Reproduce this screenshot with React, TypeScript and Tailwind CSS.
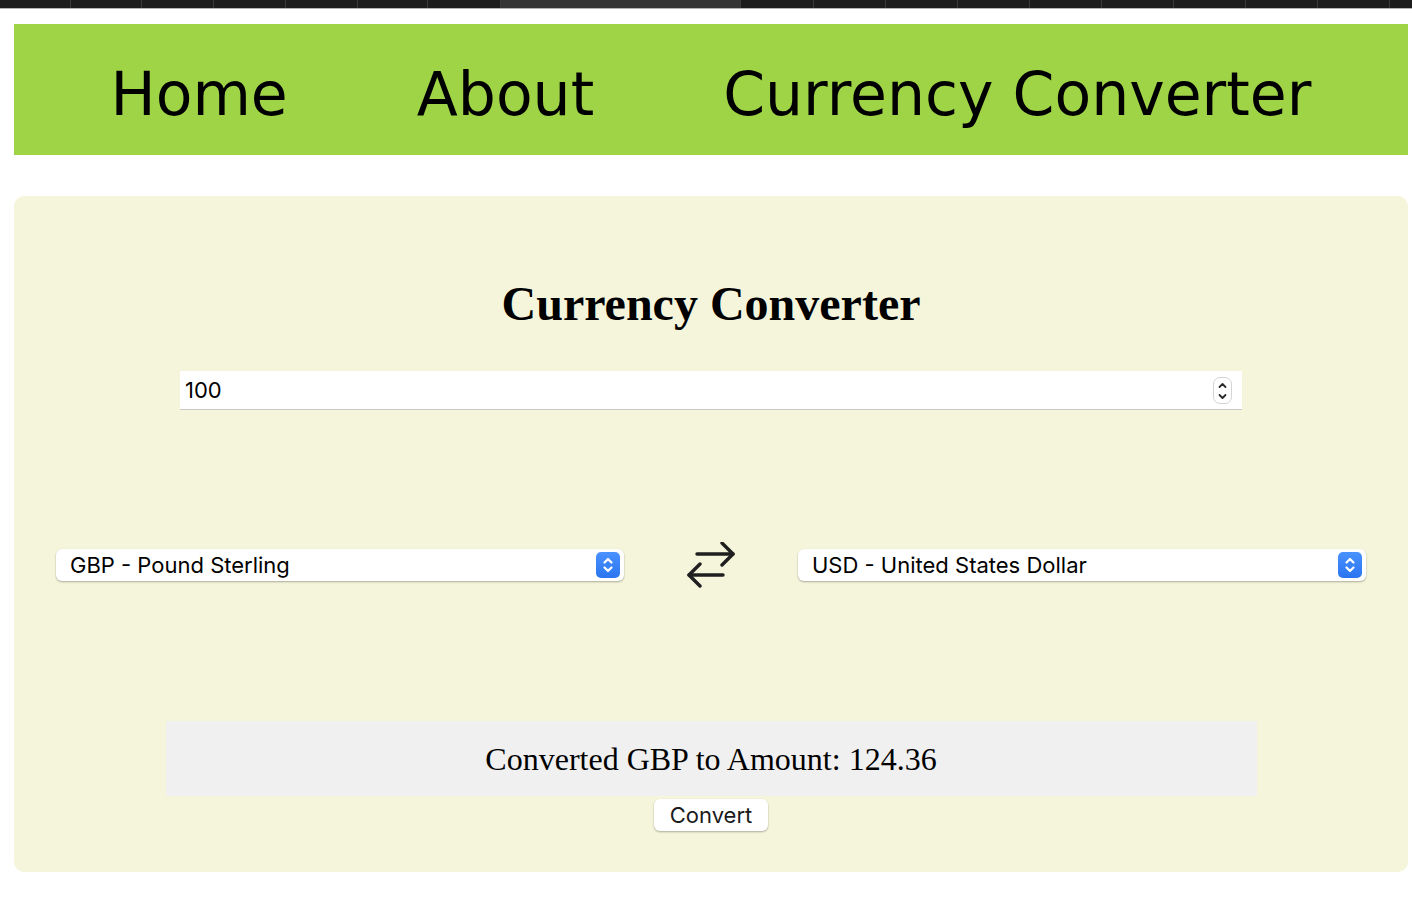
import { useState } from "react";

const tabEdges = [70, 141, 213, 285, 357, 427, 500, 740, 813, 885, 957, 1029, 1101, 1173, 1245, 1317, 1389];

const rates: Record<string, number> = {
  GBP: 1,
  USD: 1.2436,
  EUR: 1.17,
};

function SwapIcon() {
  return (
    <svg width="48" height="46" viewBox="0 0 48 46" fill="none" stroke="#1f1f1f" strokeWidth="3.4" strokeLinecap="round" strokeLinejoin="round">
      <path d="M10 12H46" />
      <path d="M35 1L46 12L35 23" />
      <path d="M2 33H36" />
      <path d="M13 22L2 33L13 44" />
    </svg>
  );
}

function SelectBox({ value, onChange, options }: { value: string; onChange: (v: string) => void; options: [string, string][] }) {
  return (
    <div className="relative w-[568px] h-[32px]">
      <select
        value={value}
        onChange={(e) => onChange(e.target.value)}
        className="appearance-none w-full h-full bg-white rounded-[6px] pl-[14px] pr-10 text-[22px] text-black outline-none shadow-[0_1px_2px_rgba(0,0,0,0.3)] font-['Inter',sans-serif]"
      >
        {options.map(([code, name]) => (
          <option key={code} value={code}>
            {code} - {name}
          </option>
        ))}
      </select>
      <div className="pointer-events-none absolute right-[4px] top-[3px] w-[24px] h-[26px] rounded-[5px] bg-gradient-to-b from-[#4a92ff] to-[#2a74f0] flex items-center justify-center">
        <svg width="12" height="18" viewBox="0 0 12 18" fill="none" stroke="white" strokeWidth="2.2" strokeLinecap="round" strokeLinejoin="round">
          <path d="M2.5 6.5L6 3L9.5 6.5" />
          <path d="M2.5 11.5L6 15L9.5 11.5" />
        </svg>
      </div>
    </div>
  );
}

export default function App() {
  const [amount, setAmount] = useState("100");
  const [from, setFrom] = useState("GBP");
  const [to, setTo] = useState("USD");
  const [result, setResult] = useState("124.36");

  const options: [string, string][] = [
    ["GBP", "Pound Sterling"],
    ["USD", "United States Dollar"],
    ["EUR", "Euro"],
  ];

  const convert = () => {
    const v = (parseFloat(amount) || 0) * (rates[to] / rates[from]);
    setResult(v.toFixed(2));
  };

  return (
    <div className="bg-white">
      {/* browser strip */}
      <div className="relative h-[8px] bg-[#1c1c1c]">
        <div className="absolute left-[500px] w-[240px] h-full bg-[#353535]" />
        {tabEdges.map((x) => (
          <div key={x} className="absolute top-0 h-full w-px bg-[#3a3a3a]" style={{ left: x }} />
        ))}
      </div>
      <div className="h-px bg-[#b5b5b5]" />

      {/* nav */}
      <nav className="ml-[14px] mr-[4px] mt-[15px] h-[131px] pt-[8px] bg-[#a0d447] flex items-center justify-center gap-[129px] font-['DejaVu_Sans',sans-serif] text-[60px] text-black">
        <a>Home</a>
        <a>About</a>
        <a>Currency Converter</a>
      </nav>

      {/* card */}
      <div className="ml-[14px] mr-[4px] mt-[41px] rounded-[10px] bg-[#f5f5dc] pt-[84px] pb-[41px]">
        <h1 className="text-center font-['Liberation_Serif',serif] font-bold text-[48px] leading-none text-black">
          Currency Converter
        </h1>

        <div className="relative mx-auto mt-[43px] w-[1062px] h-[39px]">
          <input
            type="number"
            value={amount}
            onChange={(e) => setAmount(e.target.value)}
            className="w-full h-full bg-white border-b border-[#c8c8c8] pl-[5px] text-[22px] text-black outline-none font-['Inter',sans-serif] appearance-none [&::-webkit-inner-spin-button]:appearance-none [&::-webkit-outer-spin-button]:appearance-none"
          />
          <div className="pointer-events-none absolute right-[10px] top-[6px] w-[19px] h-[27px] rounded-[7px] border border-[#d4d4d4] bg-white flex flex-col items-center justify-center">
            <svg width="11" height="22" viewBox="0 0 11 22" fill="none" stroke="#2a2a2a" strokeWidth="1.8" strokeLinecap="round" strokeLinejoin="round">
              <path d="M2.5 7L5.5 4L8.5 7" />
              <path d="M2.5 15L5.5 18L8.5 15" />
            </svg>
          </div>
        </div>

        <div className="mt-[132px] px-[42px] h-[46px] flex items-center justify-between">
          <SelectBox value={from} onChange={setFrom} options={options} />
          <button
            onClick={() => {
              setFrom(to);
              setTo(from);
            }}
            className="w-[48px] h-[46px]"
          >
            <SwapIcon />
          </button>
          <SelectBox value={to} onChange={setTo} options={options} />
        </div>

        <div className="mx-auto mt-[133px] w-[1091px] h-[75px] bg-[#f0f0f0] flex items-center justify-center font-['Liberation_Serif',serif] text-[32px] text-black">
          Converted {from} to Amount: {result}
        </div>

        <div className="mt-[3px] flex justify-center">
          <button
            onClick={convert}
            className="w-[114px] h-[32px] bg-white rounded-[6px] shadow-[0_1px_2px_rgba(0,0,0,0.3)] text-[22px] text-[#1a1a1a] font-['Inter',sans-serif]"
          >
            Convert
          </button>
        </div>
      </div>
    </div>
  );
}
